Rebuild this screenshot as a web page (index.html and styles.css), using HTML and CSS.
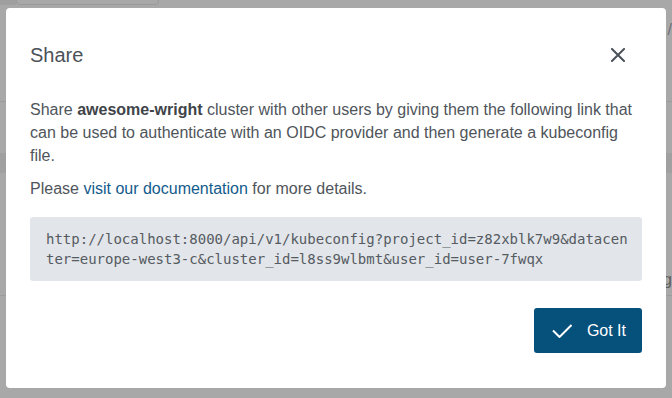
FILE: index.html
```html
<!DOCTYPE html>
<html>
<head>
<meta charset="utf-8">
<link rel="stylesheet" href="styles.css">
</head>
<body>
<div class="page">
  <div class="topbar"><span class="tab"></span><span class="ghost-btn"></span></div>
  <div class="row row-a"><span class="edge-text">/</span></div>
  <div class="row row-b"></div>
  <div class="row row-c"></div>
  <div class="row row-d"><span class="edge-text ng">ng</span></div>
  <div class="row row-e"></div>
</div>
<div class="backdrop">
  <div class="dialog">
    <div class="header">
      <h2 class="title">Share</h2>
      <button class="close" aria-label="Close">
        <svg width="14" height="14" viewBox="0 0 14 14"><path d="M1 1L13 13M13 1L1 13" stroke="#4b5159" stroke-width="2" stroke-linecap="square" fill="none"/></svg>
      </button>
    </div>
    <div class="content">
      <p class="text">Share <strong>awesome-wright</strong> cluster with other users by giving them the following link that can be used to authenticate with an OIDC provider and then generate a kubeconfig file.</p>
      <p class="text">Please <a class="link" href="#">visit our documentation</a> for more details.</p>
      <div class="code">http://localhost:8000/api/v1/kubeconfig?project_id=z82xblk7w9&amp;datacenter=europe-west3-c&amp;cluster_id=l8ss9wlbmt&amp;user_id=user-7fwqx</div>
    </div>
    <div class="actions">
      <button class="primary">
        <svg width="20" height="14" viewBox="0 0 20 14"><path d="M1 6.5L7.5 13L19.5 1" stroke="#fff" stroke-width="2" fill="none"/></svg>
        <span>Got It</span>
      </button>
    </div>
  </div>
</div>
</body>
</html>
```
FILE: styles.css
```css
html, body {
  margin: 0;
  padding: 0;
}
body {
  width: 672px;
  height: 398px;
  overflow: hidden;
  background: #a8a8a8;
  font-family: "Liberation Sans", Arial, sans-serif;
}
.page {
  display: flex;
  flex-direction: column;
  height: 398px;
}
.topbar {
  display: flex;
  height: 5px;
}
.tab {
  width: 16px;
  background: #9f9f9f;
}
.ghost-btn {
  width: 141px;
  height: 4px;
  border: 1px solid #9a9a9a;
  border-top: none;
  border-radius: 0 0 4px 4px;
}
.row {
  display: flex;
  justify-content: flex-end;
}
.row-a {
  height: 96px;
  border-bottom: 1px solid #9c9c9c;
}
.row-b {
  height: 51px;
}
.row-c {
  height: 20px;
  background: #a0a0a0;
}
.row-d {
  height: 122px;
  border-bottom: 1px solid #9c9c9c;
}
.row-e {
  height: 76px;
}
.edge-text {
  font-size: 16px;
  color: #6f6f78;
  margin-top: 16px;
}
.ng {
  margin-top: 98px;
  color: #5e5e5e;
}
.backdrop {
  position: fixed;
  inset: 0;
  padding: 8px 6px;
}
.dialog {
  width: 660px;
  height: 380px;
  box-sizing: border-box;
  background: #fff;
  border-radius: 4px;
  padding: 35px 24px 0 24px;
  display: flex;
  flex-direction: column;
}
.header {
  display: flex;
  align-items: center;
  justify-content: space-between;
  height: 24px;
}
.title {
  margin: 0;
  font-size: 20px;
  font-weight: normal;
  line-height: 24px;
  color: #4b5159;
}
.close {
  border: none;
  background: none;
  padding: 0;
  margin-right: 17px;
  width: 14px;
  height: 14px;
  display: flex;
}
.content {
  margin-top: 31px;
}
.text {
  margin: 0 0 10px 0;
  font-size: 16px;
  line-height: 23px;
  color: #4f555b;
}
.text strong {
  color: #3f4449;
}
.link {
  color: #135b8c;
  text-decoration: none;
}
.code {
  margin-top: 17px;
  background: #e2e5e9;
  border-radius: 3px;
  padding: 12px 12px 12px 16px;
  font-family: "DejaVu Sans Mono", monospace;
  font-size: 14px;
  line-height: 20px;
  color: #555b62;
  word-break: break-all;
}
.actions {
  display: flex;
  justify-content: flex-end;
  margin-top: 27px;
}
.primary {
  display: flex;
  align-items: center;
  gap: 15px;
  height: 45px;
  box-sizing: border-box;
  padding: 0 16px 0 18px;
  background: #06507c;
  color: #fff;
  border: none;
  border-radius: 3px;
  font-family: "Liberation Sans", Arial, sans-serif;
  font-size: 16px;
}
.primary svg {
  margin-top: 1px;
}
```
